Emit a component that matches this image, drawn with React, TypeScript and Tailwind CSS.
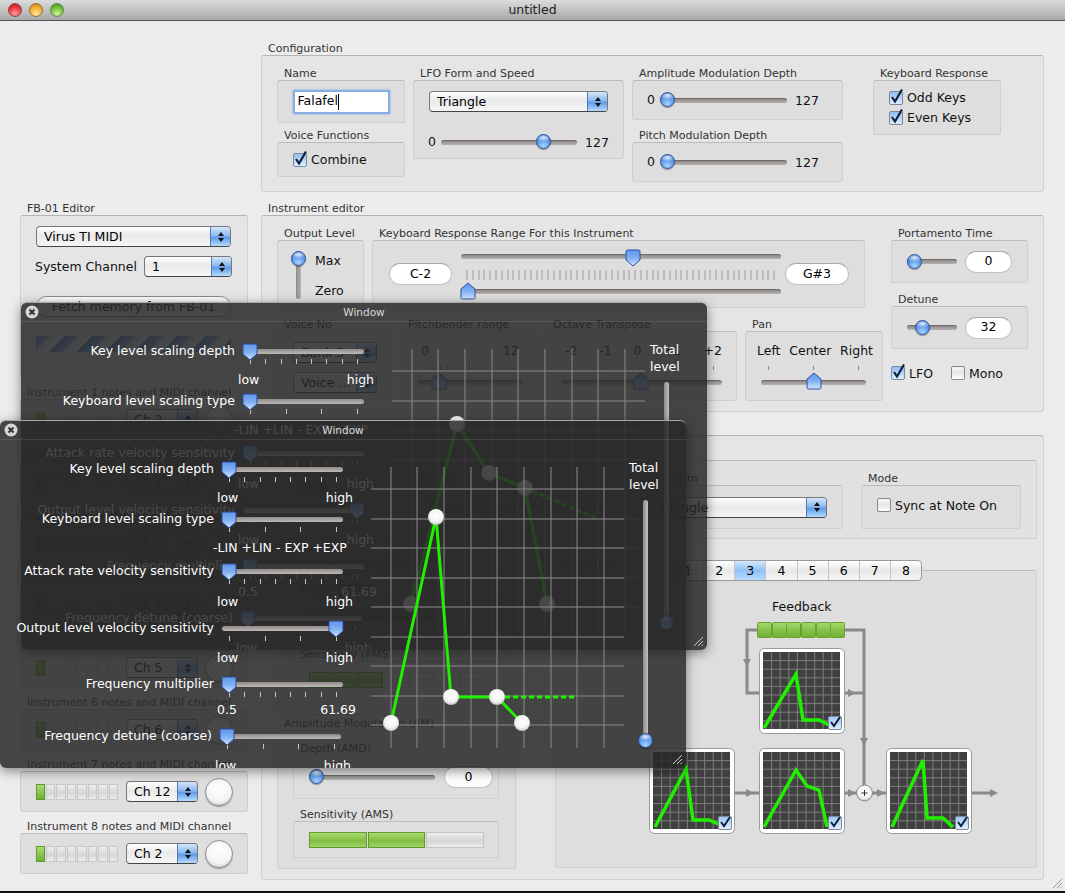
import React from 'react';

// --- Aqua controls ---
const Defs = () => (
  <svg className="absolute w-0 h-0">
    <defs>
      <linearGradient id="pointerFill" x1="0" y1="0" x2="0" y2="1">
        <stop offset="0" stopColor="#5f95ea" />
        <stop offset="0.5" stopColor="#7fb0f2" />
        <stop offset="1" stopColor="#d2e6ff" />
      </linearGradient>
      <linearGradient id="greenFill" x1="0" y1="0" x2="0" y2="1">
        <stop offset="0" stopColor="#a7d86f" />
        <stop offset="0.5" stopColor="#86c24a" />
        <stop offset="1" stopColor="#6fb032" />
      </linearGradient>
      <linearGradient id="checkFill" x1="0" y1="0" x2="0" y2="1">
        <stop offset="0" stopColor="#9cc8f5" />
        <stop offset="1" stopColor="#e0f0ff" />
      </linearGradient>
      <radialGradient id="knobFill" cx="0.5" cy="0.4" r="0.6">
        <stop offset="0" stopColor="#ffffff" />
        <stop offset="0.7" stopColor="#f2f2f2" />
        <stop offset="1" stopColor="#bdbdbd" />
      </radialGradient>
    </defs>
  </svg>
);

const Group: React.FC<{ label?: string; className?: string; box?: string; outer?: boolean; children?: React.ReactNode }> = ({ label, className, box, outer, children }) => (
  <div className={className}>
    <div className="h-[14px] pl-[7px] pt-px text-[11px] leading-[14px] text-[#333] whitespace-nowrap">{label}</div>
    <div className={`rounded-[3px] border ${outer ? 'bg-[#e5e5e5] border-[#d0d0d0] border-t-[#b4b4b4]' : 'bg-[#dedede] border-[#cfcfcf] border-t-[#bcbcbc]'} ${box ?? ''}`}>
      {children}
    </div>
  </div>
);

const Select: React.FC<{ value: string; className?: string }> = ({ value, className }) => (
  <div className={`flex h-[21px] rounded-[4px] border border-[#777] border-b-[#444] bg-[linear-gradient(180deg,#ffffff_0%,#e9e9e9_45%,#f6f6f6_100%)] text-[12.5px] leading-[19px] text-black overflow-hidden ${className ?? ''}`}>
    <div className="flex-1 pl-[7px] whitespace-nowrap overflow-hidden">{value}</div>
    <div className="w-[20px] flex flex-col items-center justify-center gap-[2px] border-l border-[#5578b8] bg-[linear-gradient(180deg,#d4e6fb_0%,#8db9f0_45%,#5f9be8_55%,#b5dcff_100%)]">
      <div className="w-0 h-0 border-x-[3px] border-x-transparent border-b-[4px] border-b-[#111]" />
      <div className="w-0 h-0 border-x-[3px] border-x-transparent border-t-[4px] border-t-[#111]" />
    </div>
  </div>
);

const Ball: React.FC<{ className?: string; style?: React.CSSProperties }> = ({ className, style }) => (
  <div
    style={style}
    className={`w-[15px] h-[15px] rounded-full border border-[#2a4e9e] bg-[radial-gradient(ellipse_60%_30%_at_50%_20%,rgba(255,255,255,0.85),transparent),radial-gradient(circle_at_50%_85%,#a6d4ff_0%,#5f9cea_50%,#2f64c0_100%)] shadow-[0_1px_1px_rgba(0,0,0,0.35)] ${className ?? ''}`}
  />
);

const Pointer: React.FC<{ down?: boolean; style?: React.CSSProperties; className?: string }> = ({ down, style, className }) => (
  <svg width="16" height="18" viewBox="0 0 16 18" style={style} className={className}>
    <path
      d={down ? 'M1 2.5a1.5 1.5 0 0 1 1.5-1.5h11a1.5 1.5 0 0 1 1.5 1.5v8.5l-7 6-7-6z' : 'M8 1l7 6v8.5a1.5 1.5 0 0 1-1.5 1.5h-11a1.5 1.5 0 0 1-1.5-1.5v-8.5z'}
      fill="url(#pointerFill)"
      stroke="#2d4f9e"
      strokeWidth="1"
    />
  </svg>
);

const Slider: React.FC<{ w: string; pos: number; thumb?: 'ball' | 'up' | 'down'; hud?: boolean; className?: string }> = ({ w, pos, thumb = 'ball', hud, className }) => (
  <div className={`relative h-[14px] flex items-center ${w} ${className ?? ''}`}>
    <div className={hud ? 'h-[5px] w-full rounded-full bg-[linear-gradient(180deg,#8f8a88,#bdb9b7)]' : 'h-[5px] w-full rounded-full border-t border-[#6f6a66] bg-[linear-gradient(180deg,#8f8a87,#b5b2af)]'} />
    {thumb === 'ball' ? (
      <Ball className="absolute top-[-1px]" style={{ left: pos - 8 }} />
    ) : (
      <Pointer down={thumb === 'down'} className="absolute" style={{ left: pos - 8, top: thumb === 'down' ? -1 : -3 }} />
    )}
  </div>
);

const Field: React.FC<{ value: string; className?: string }> = ({ value, className }) => (
  <div className={`h-[22px] rounded-full bg-white border border-[#c4c4c4] border-t-[#a8a8a8] flex items-center justify-center text-[12.5px] text-black ${className ?? ''}`}>{value}</div>
);

const Check: React.FC<{ on?: boolean; label: string; className?: string }> = ({ on, label, className }) => (
  <div className={`flex items-center gap-[4px] text-[12.5px] text-[#111] ${className ?? ''}`}>
    <div className={`relative w-[14px] h-[14px] rounded-[2px] border border-[#7e8a9c] ${on ? 'bg-[linear-gradient(180deg,#8fbdf0,#dcefff)]' : 'bg-[linear-gradient(180deg,#f6f6f6,#e6e6e6_50%,#ffffff)]'}`}>
      {on && (
        <svg width="16" height="17" viewBox="0 0 16 17" className="absolute left-[-1px] top-[-4px]">
          <path d="M3 9l3 4.5L13 1.5" fill="none" stroke="#10203a" strokeWidth="2.2" />
        </svg>
      )}
    </div>
    <span className="relative top-px">{label}</span>
  </div>
);

const Ticks: React.FC<{ n: number; className: string }> = ({ n, className }) => (
  <div className={`flex justify-between ${className}`}>
    {Array.from({ length: n }).map((_, i) => (
      <div key={i} className="w-px h-full bg-[#8a8a8a]" />
    ))}
  </div>
);

const Segs: React.FC<{ n: number; on: number; className?: string }> = ({ n, on, className }) => (
  <div className={`flex gap-px ${className ?? ''}`}>
    {Array.from({ length: n }).map((_, i) => (
      <div
        key={i}
        className={`flex-1 border ${i < on ? 'border-[#5f9a2a] bg-[linear-gradient(180deg,#a9da72,#82c046_55%,#a0d168)]' : 'border-[#c4c4c4] bg-[linear-gradient(180deg,#efefef,#d4d4d4_55%,#ececec)]'}`}
      />
    ))}
  </div>
);

// --- Left column ---
const Instrument: React.FC<{ n: number; ch: string }> = ({ n, ch }) => (
  <Group label={`Instrument ${n} notes and MIDI channel`} box="h-[41px] pl-[15px] flex items-center">
    <div className="flex w-[82px] h-[16px] gap-[1px]">
      <div className="w-[9px] border border-[#5f9a2a] bg-[linear-gradient(180deg,#a9da72,#6fb032)]" />
      {Array.from({ length: 7 }).map((_, i) => (
        <div key={i} className="flex-1 border border-[#c8c8c8] bg-[linear-gradient(180deg,#eeeeee,#d6d6d6_55%,#ececec)]" />
      ))}
    </div>
    <Select value={ch} className="w-[72px] ml-[8px]" />
    <div className="w-[28px] h-[28px] ml-[7px] rounded-full border border-[#8e8e8e] bg-[radial-gradient(circle_at_50%_35%,#ffffff_0%,#f4f4f4_60%,#c8c8c8_100%)] shadow-[0_1px_1px_rgba(0,0,0,0.3)]" />
  </Group>
);

const LeftColumn = () => (
  <div className="w-[228px] ml-[20px] mt-[180px] flex flex-col gap-[7px] shrink-0">
    <Group label="FB-01 Editor" outer box="h-[163px] pl-[15px] pr-[15px] pt-[10px] flex flex-col">
      <Select value="Virus TI MIDI" className="w-[195px]" />
      <div className="flex items-center mt-[9px] w-[196px] justify-between">
        <span className="text-[12.5px] text-[#111] -ml-px relative top-px">System Channel</span>
        <Select value="1" className="w-[88px]" />
      </div>
      <div className="w-[195px] h-[21px] mt-[19px] rounded-full border border-[#888] bg-[linear-gradient(180deg,#ffffff,#e8e8e8_50%,#f7f7f7)] text-center text-[12.5px] leading-[19px] text-black">Fetch memory from FB-01</div>
      <div className="w-[195px] h-[16px] mt-[19px] bg-[repeating-linear-gradient(135deg,#4c82d0_0px,#7fa9e4_8px,#dce8f8_12px,#f2f6fc_20px)]" />
    </Group>
    {['Ch 2', 'Ch 1', 'Ch 6', 'Ch 16', 'Ch 5', 'Ch 6', 'Ch 12', 'Ch 2'].map((ch, i) => (
      <Instrument key={i} n={i + 1} ch={ch} />
    ))}
  </div>
);

// --- Configuration ---
const Configuration = () => (
  <Group label="Configuration" outer box="h-[137px] pl-[15px] pt-[10px] flex gap-2">
    <div className="w-[128px] flex flex-col gap-[5px]">
      <Group label="Name" box="h-[43px] flex items-center justify-center">
        <div className="w-[97px] h-[24px] border-2 border-[#86aee4] rounded-[1px] bg-white flex items-center pl-[3px] shadow-[0_0_2px_#6c9ce0]">
          <span className="text-[12.5px] text-black">Falafel</span>
          <div className="w-px h-[16px] bg-black" />
        </div>
      </Group>
      <Group label="Voice Functions" box="h-[35px] pl-[15px] flex items-center">
        <Check on label="Combine" />
      </Group>
    </div>
    <Group label="LFO Form and Speed" className="w-[211px]" box="h-[79px] pl-[14px] pt-[10px]">
      <Select value="Triangle" className="w-[179px] ml-px" />
      <div className="flex items-center mt-[21px] text-[12.5px] text-[#111]">
        <span className="w-[13px]">0</span>
        <Slider w="w-[136px]" pos={103} />
        <span className="ml-[8px] relative top-px">127</span>
      </div>
    </Group>
    <div className="w-[211px] flex flex-col gap-[8px]">
      <Group label="Amplitude Modulation Depth" box="h-[40px] pl-[14px] flex items-center text-[12.5px] text-[#111]">
        <span className="w-[15px]">0</span>
        <Slider w="w-[125px]" pos={6} />
        <span className="ml-[8px] relative top-px">127</span>
      </Group>
      <Group label="Pitch Modulation Depth" box="h-[40px] pl-[14px] flex items-center text-[12.5px] text-[#111]">
        <span className="w-[15px]">0</span>
        <Slider w="w-[125px]" pos={6} />
        <span className="ml-[8px] relative top-px">127</span>
      </Group>
    </div>
    <Group label="Keyboard Response" className="w-[128px] ml-[22px]" box="h-[55px] pl-[15px] flex flex-col justify-center">
      <Check on label="Odd Keys" className="h-[20px]" />
      <Check on label="Even Keys" className="h-[20px]" />
    </Group>
  </Group>
);

// --- Instrument editor ---
const InstrumentEditor = () => (
  <Group label="Instrument editor" outer className="mt-[9px]" box="h-[197px] pl-[15px] pt-[10px] flex gap-2">
    <div className="w-[606px]">
      <div className="flex gap-2">
        <Group label="Output Level" className="w-[87px]" box="h-[68px] pl-[13px] pt-[10px] flex">
          <div className="relative w-[14px] h-[48px] flex justify-center">
            <div className="w-[5px] h-full rounded-full bg-[linear-gradient(90deg,#8f8a87,#b5b2af)]" />
            <Ball className="absolute top-0 left-0" />
          </div>
          <div className="ml-[10px] pt-[2px] flex flex-col gap-[14px] text-[12.5px] leading-[16px] text-[#111]">
            <span>Max</span>
            <span>Zero</span>
          </div>
        </Group>
        <Group label="Keyboard Response Range For this Instrument" className="w-[493px]" box="h-[68px] pl-[16px] flex items-center">
          <Field value="C-2" className="w-[63px]" />
          <div className="w-[320px] ml-[9px] flex flex-col">
            <Slider w="w-full" pos={172} thumb="down" />
            <div className="flex justify-between h-[10px] mt-[6px] px-[5px]">
              {Array.from({ length: 54 }).map((_, i) => (
                <div key={i} className="w-[2px] h-full bg-[#bdbdbd]" />
              ))}
            </div>
            <Slider w="w-full" pos={7} thumb="up" className="mt-[5px]" />
          </div>
          <Field value="G#3" className="w-[64px] ml-[4px]" />
        </Group>
      </div>
      <div className="flex gap-2 mt-[9px]">
        <Group label="Voice No" className="w-[116px]" box="h-[70px] pl-[15px] pt-[10px] flex flex-col gap-[9px]">
          <Select value="Bank 3" className="w-[84px]" />
          <Select value="Voice ..." className="w-[84px]" />
        </Group>
        <Group label="Pitchbender range" className="w-[137px]" box="h-[70px] pl-[15px] pt-[11px] text-[12.5px] text-[#111]">
          <div className="flex justify-between pl-[4px] w-[102px] leading-[16px]"><span>0</span><span>12</span></div>
          <Ticks n={13} className="w-[90px] ml-[8px] h-[4px] mt-[7px]" />
          <Slider w="w-[106px]" pos={22} thumb="up" className="mt-[5px]" />
        </Group>
        <Group label="Octave Transpose" className="w-[191px]" box="h-[70px] pl-[15px] pt-[11px] text-[12.5px] text-[#111]">
          <div className="flex justify-between w-[160px] pl-[3px] leading-[16px]"><span>-2</span><span>-1</span><span>0</span><span>+1</span><span>+2</span></div>
          <Ticks n={5} className="w-[144px] ml-[8px] h-[4px] mt-[7px]" />
          <Slider w="w-[160px]" pos={79} thumb="up" className="mt-[5px]" />
        </Group>
        <Group label="Pan" className="w-[138px]" box="h-[70px] pl-[11px] pt-[11px] text-[12.5px] text-[#111]">
          <div className="flex justify-between w-[116px] leading-[16px]"><span>Left</span><span>Center</span><span>Right</span></div>
          <Ticks n={3} className="w-[91px] ml-[11px] h-[4px] mt-[7px]" />
          <Slider w="w-[105px]" pos={53} thumb="up" className="mt-[5px] ml-[4px]" />
        </Group>
      </div>
    </div>
    <div className="w-[137px]">
      <Group label="Portamento Time" box="h-[43px] pl-[15px] flex items-center">
        <Slider w="w-[50px]" pos={8} />
        <Field value="0" className="w-[47px] ml-[8px]" />
      </Group>
      <Group label="Detune" className="mt-[9px]" box="h-[43px] pl-[15px] flex items-center">
        <Slider w="w-[50px]" pos={16} />
        <Field value="32" className="w-[47px] ml-[8px]" />
      </Group>
      <div className="flex gap-[18px] mt-[15px]">
        <Check on label="LFO" />
        <Check label="Mono" />
      </div>
    </div>
  </Group>
);

// --- Algorithm diagram ---
const MiniGraph: React.FC<{ x: number; y: number; pts: string }> = ({ x, y, pts }) => (
  <g transform={`translate(${x} ${y})`}>
    <rect x="0.5" y="0.5" width="85" height="85" rx="5" fill="#ffffff" stroke="#9a9a9a" />
    <rect x="4" y="4" width="77" height="77" fill="#404040" />
    {Array.from({ length: 8 }).map((_, i) => (
      <g key={i} stroke="#7c7c7c" strokeWidth="1">
        <line x1={4 + (i + 1) * 8.6} y1="4" x2={4 + (i + 1) * 8.6} y2="81" />
        <line x1="4" y1={4 + (i + 1) * 8.6} x2="81" y2={4 + (i + 1) * 8.6} />
      </g>
    ))}
    <polyline points={pts} fill="none" stroke="#20f000" strokeWidth="3.5" />
    <rect x="69.5" y="68.5" width="13" height="13" rx="1.5" fill="url(#checkFill)" stroke="#7e8a9c" />
    <path d="M72 74l3 4 6-9" fill="none" stroke="#10203a" strokeWidth="2" />
  </g>
);

const Arrow: React.FC<{ d: string }> = ({ d }) => <path d={d} fill="#8a8a8a" />;

const Algorithm = () => (
  <svg width="480" height="296" viewBox="556 572 480 296">
    <text x="772" y="612" fontSize="12.5" fill="#111">Feedback</text>
    <g stroke="#8a8a8a" strokeWidth="3" fill="none">
      <path d="M757 631H747V694H759" />
      <path d="M845 631H864V786" />
      <path d="M844 694H864" />
      <path d="M734 794H759" />
      <path d="M844 794H857" />
      <path d="M872 794H886" />
      <path d="M971 794H992" />
    </g>
    <Arrow d="M743 660h8l-4 8z" />
    <Arrow d="M860 739h8l-4 8z" />
    <Arrow d="M848 690v8l8-4z" />
    <Arrow d="M746 790v8l8-4z" />
    <Arrow d="M848 790v8l8-4z" />
    <Arrow d="M877 790v8l8-4z" />
    <Arrow d="M990 790v8l8-4z" />
    {[757, 772, 786, 801, 816, 830].map((x) => (
      <rect key={x} x={x + 0.5} y="623.5" width="14" height="15" rx="1" fill="url(#greenFill)" stroke="#66a32c" />
    ))}
    <MiniGraph x={759} y={649} pts="5,80 37,26 44,72 60,72 76,80" />
    <MiniGraph x={649} y={749} pts="6,79 37,21 44,72 60,72 76,79" />
    <MiniGraph x={759} y={749} pts="5,79 37,22 48,38 60,42 68,79" />
    <MiniGraph x={886} y={749} pts="6,79 37,12 41,70 57,70 67,79" />
    <circle cx="864.5" cy="794" r="8" fill="url(#knobFill)" stroke="#8a8a8a" />
    <path d="M861.5 794h6M864.5 791v6" stroke="#333" strokeWidth="1" />
  </svg>
);

const Tabs = () => (
  <div className="absolute left-[117px] top-[4px] w-[250px] h-[21px] flex rounded-[4px] border border-[#9a9a9a] bg-[linear-gradient(180deg,#ffffff,#e8e8e8_50%,#f6f6f6)] overflow-hidden text-[12.5px] leading-[19px] text-black">
    {['1', '2', '3', '4', '5', '6', '7', '8'].map((t) => (
      <div key={t} className={`flex-1 text-center border-r border-[#c4c4c4] last:border-r-0 ${t === '3' ? 'bg-[linear-gradient(180deg,#d6e8fb,#8fc0f5_50%,#b8dcff)]' : ''}`}>{t}</div>
    ))}
  </div>
);

// --- Operator editor ---
const OperatorEditor = () => (
  <div className="mt-[23px] h-[445px] bg-[#e5e5e5] border border-[#d0d0d0] border-t-[#b4b4b4] rounded-[3px] pl-[15px] pt-[24px]">
    <div className="w-[760px] h-[79px] bg-[#e2e2e2] border border-[#d0d0d0] border-t-[#bcbcbc] rounded-[3px] pt-[10px] flex">
      <div className="w-[135px] pl-[19px] pt-[5px] text-[12.5px] text-[#111]">Bass</div>
      <Group label="Speed" className="w-[209px]" box="h-[44px] pl-[14px] flex items-center text-[12.5px] text-[#111]">
        <span className="w-[15px]">0</span>
        <Slider w="w-[130px]" pos={40} />
        <span className="ml-[8px]">204</span>
      </Group>
      <Group label="Waveform" className="w-[208px] ml-[13px]" box="h-[44px] pl-[15px] flex items-center">
        <Select value="Triangle" className="w-[176px]" />
      </Group>
      <Group label="Mode" className="w-[160px] ml-[18px]" box="h-[44px] pl-[15px] pt-[10px]">
        <Check label="Sync at Note On" />
      </Group>
    </div>
    <div className="flex mt-[17px]">
      <div className="w-[239px] flex flex-col gap-[1px]">
        <Group label="Pitch Modulation (PM)" box="h-[145px] pl-[15px] pt-[10px]">
          <Group label="Depth (PMD)" className="w-[206px]" box="h-[45px] pl-[16px] flex items-center">
            <Slider w="w-[125px]" pos={7} />
            <Field value="0" className="w-[49px] ml-[9px]" />
          </Group>
          <Group label="Sensitivity (PMS)" className="w-[206px] mt-[7px]" box="h-[49px] pl-[15px] pt-[10px]">
            <Segs n={7} on={3} className="w-[175px] h-[16px]" />
          </Group>
        </Group>
        <Group label="Amplitude Modulation (AM)" box="h-[139px] pl-[15px] pt-[10px]">
          <Group label="Depth (AMD)" className="w-[206px]" box="h-[44px] pl-[16px] flex items-center">
            <Slider w="w-[125px]" pos={7} />
            <Field value="0" className="w-[49px] ml-[9px]" />
          </Group>
          <Group label="Sensitivity (AMS)" className="w-[206px] mt-[8px]" box="h-[37px] pl-[15px] pt-[10px]">
            <Segs n={3} on={2} className="w-[175px] h-[16px]" />
          </Group>
        </Group>
      </div>
      <div className="relative w-[482px] ml-[39px]">
        <Group label="Algorithm" box="h-[298px]">
          <Algorithm />
        </Group>
        <Tabs />
      </div>
    </div>
  </div>
);

// --- Floating HUD windows ---
type HudRow = { label: string; ticks: number; pos: number; height: string; gap: string; kind: 'lowhigh' | 'lin' | 'freq'; shift?: string };

const hudRows: HudRow[] = [
  { label: 'Key level scaling depth', ticks: 8, pos: 7, height: 'h-[50px]', gap: 'mt-[9px]', kind: 'lowhigh' },
  { label: 'Keyboard level scaling type', ticks: 4, pos: 7, height: 'h-[52px]', gap: 'mt-[9px]', kind: 'lin' },
  { label: 'Attack rate velocity sensitivity', ticks: 8, pos: 7, height: 'h-[57px]', gap: 'mt-[11px]', kind: 'lowhigh' },
  { label: 'Output level velocity sensitivity', ticks: 4, pos: 114, height: 'h-[56px]', gap: 'mt-[10px]', kind: 'lowhigh' },
  { label: 'Frequency multiplier', ticks: 8, pos: 7, height: 'h-[52px]', gap: 'mt-[6px]', kind: 'freq' },
  { label: 'Frequency detune (coarse)', ticks: 4, pos: 7, height: 'h-[52px]', gap: 'mt-[10px]', kind: 'lowhigh', shift: '-ml-[2px]' },
];

const GRID_X = [20, 46, 73, 100, 126, 153, 180, 206, 233];
const GRID_Y = [22, 52, 81, 111, 140, 170, 199, 229, 258];

const EnvGraph: React.FC<{ pts: number[][]; dash: number[] }> = ({ pts, dash }) => (
  <svg width="253" height="281" viewBox="0 0 253 281" className="shrink-0 mt-[27px]">
    {GRID_X.map((x) => <line key={x} x1={x} y1="0" x2={x} y2="281" stroke="#8a8a8a" strokeWidth="1" />)}
    {GRID_Y.map((y) => <line key={y} x1="0" y1={y} x2="253" y2={y} stroke="#8a8a8a" strokeWidth="1" />)}
    <polyline points={pts.map((p) => p.join(',')).join(' ')} fill="none" stroke="#20f000" strokeWidth="3" />
    <line x1={pts[3][0]} y1={pts[3][1]} x2={dash[0]} y2={dash[1]} stroke="#20f000" strokeWidth="3" strokeDasharray="5 3" />
    {pts.map((p, i) => (
      <circle key={i} cx={p[0]} cy={p[1]} r="8" fill="url(#knobFill)" />
    ))}
  </svg>
);

const Grip: React.FC<{ className: string; color: string }> = ({ className, color }) => (
  <svg width="11" height="11" viewBox="0 0 11 11" className={className}>
    <path d="M1 10L10 1M5 10L10 5M8.5 10L10 8.5" stroke={color} strokeWidth="1" />
  </svg>
);

const HudWindow: React.FC<{ className: string; pts: number[][]; dash: number[] }> = ({ className, pts, dash }) => (
  <div className={`absolute w-[686px] h-[348px] overflow-hidden rounded-[6px] border-t border-[#a8a8a8] bg-[rgba(40,40,40,0.85)] shadow-[0_3px_12px_rgba(0,0,0,0.45)] text-[12.5px] text-white ${className}`}>
    <div className="relative h-[19px] border-b border-white/10 text-center text-[10.5px] leading-[19px] text-[#d8d8d8]">
      Window
      <svg width="14" height="14" viewBox="0 0 14 14" className="absolute left-[4px] top-[2px]">
        <circle cx="7" cy="7" r="6.5" fill="#d6d6d6" />
        <path d="M4.5 4.5l5 5M9.5 4.5l-5 5" stroke="#333" strokeWidth="2" />
      </svg>
    </div>
    <div className="flex">
      <div className="w-[371px] shrink-0 pt-[22px]">
        {hudRows.map((row) => (
          <div key={row.label} className={`${row.height} ${row.shift ?? ''}`}>
            <div className="flex items-center h-[14px]">
              <div className="w-[214px] text-right whitespace-nowrap leading-[14px]">{row.label}</div>
              <Slider w="w-[121px]" pos={row.pos} thumb="down" hud className="ml-[8px]" />
            </div>
            <Ticks n={row.ticks} className="w-[108px] ml-[229px] h-[5px] mt-[1px] [&>div]:bg-[#c8c8c8]" />
            <div className={`${row.gap} leading-[14px] whitespace-nowrap`}>
              {row.kind === 'lin' && <div className="ml-[213px]">-LIN +LIN - EXP +EXP</div>}
              {row.kind === 'lowhigh' && (
                <div className="ml-[217px] w-[136px] flex justify-between"><span>low</span><span>high</span></div>
              )}
              {row.kind === 'freq' && (
                <div className="ml-[217px] w-[139px] flex justify-between"><span>0.5</span><span>61.69</span></div>
              )}
            </div>
          </div>
        ))}
      </div>
      <EnvGraph pts={pts} dash={dash} />
      <div className="ml-[5px] pt-[19px] w-[40px]">
        <div className="leading-[17px]">Total<br />level</div>
        <div className="relative w-[5px] h-[240px] ml-[14px] mt-[7px] rounded-full bg-[linear-gradient(90deg,#8f8a88,#c4c0be)]">
          <Ball className="absolute left-[-5px] bottom-[-8px]" />
        </div>
      </div>
    </div>
    <Grip className="absolute right-[3px] bottom-[3px]" color="#cccccc" />
  </div>
);

const App: React.FC = () => (
  <div className="relative w-[1065px] h-[893px] overflow-hidden bg-[#ececec] [font-family:'DejaVu_Sans',sans-serif] border-b-2 border-[#111]">
    <Defs />
    <div className="relative h-[21px] border-b border-[#555] bg-[linear-gradient(180deg,#dcdcdc,#a8a8a8)] text-center text-[12.5px] leading-[20px] text-[#222]">
      untitled
      <div className="absolute left-[8px] top-[3px] flex gap-[7px]">
        <div className="w-[14px] h-[14px] rounded-full border border-[#8a4a4a] bg-[radial-gradient(circle_at_50%_80%,#ff9a9a,#e8333a_60%,#a91c20)]" />
        <div className="w-[14px] h-[14px] rounded-full border border-[#96743a] bg-[radial-gradient(circle_at_50%_80%,#ffe79a,#f0a82a_60%,#b87a12)]" />
        <div className="w-[14px] h-[14px] rounded-full border border-[#5b8a40] bg-[radial-gradient(circle_at_50%_80%,#c8f09a,#6dbb38_60%,#3f8a1c)]" />
      </div>
    </div>
    <div className="flex">
      <LeftColumn />
      <div className="w-[783px] ml-[13px] mt-[20px] shrink-0">
        <Configuration />
        <InstrumentEditor />
        <OperatorEditor />
      </div>
    </div>
    <HudWindow className="left-[21px] top-[302px]" pts={[[19, 255], [65, 75], [97, 124], [133, 139], [155, 255]]} dash={[206, 170]} />
    <HudWindow className="left-0 top-[420px]" pts={[[20, 256], [65, 50], [80, 230], [126, 230], [151, 256]]} dash={[206, 230]} />
    <Grip className="absolute right-[2px] bottom-[2px]" color="#999999" />
  </div>
);

export default App;
